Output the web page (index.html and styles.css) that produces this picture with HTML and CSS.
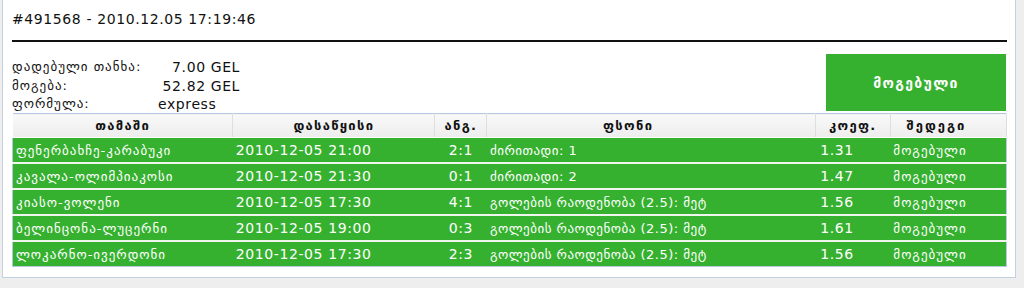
FILE: index.html
```html
<!DOCTYPE html>
<html lang="ka">
<head>
<meta charset="utf-8">
<title>#491568</title>
<link rel="stylesheet" href="styles.css">
</head>
<body>
<div class="panel">
  <div class="title">#491568 - 2010.12.05 17:19:46</div>
  <div class="summary">
    <div class="info">
      <div class="info-row"><span class="label">დადებული თანხა:</span><span class="value num">7.00 GEL</span></div>
      <div class="info-row"><span class="label">მოგება:</span><span class="value num">52.82 GEL</span></div>
      <div class="info-row"><span class="label">ფორმულა:</span><span class="value">express</span></div>
    </div>
    <div class="status">მოგებული</div>
  </div>
  <table class="bets">
    <colgroup>
      <col class="c-game"><col class="c-date"><col class="c-score"><col class="c-bet"><col class="c-coef"><col class="c-res">
    </colgroup>
    <thead>
      <tr><th>თამაში</th><th>დასაწყისი</th><th>ანგ.</th><th class="h-bet">ფსონი</th><th>კოეფ.</th><th class="h-res">შედეგი</th></tr>
    </thead>
    <tbody>
      <tr><td>ფენერბახჩე-კარაბუკი</td><td class="d">2010-12-05 21:00</td><td class="s">2:1</td><td class="b">ძირითადი: 1</td><td class="k">1.31</td><td>მოგებული</td></tr>
      <tr><td>კავალა-ოლიმპიაკოსი</td><td class="d">2010-12-05 21:30</td><td class="s">0:1</td><td class="b">ძირითადი: 2</td><td class="k">1.47</td><td>მოგებული</td></tr>
      <tr><td>კიასო-ვოლენი</td><td class="d">2010-12-05 17:30</td><td class="s">4:1</td><td class="b">გოლების რაოდენობა (2.5): მეტ</td><td class="k">1.56</td><td>მოგებული</td></tr>
      <tr><td>ბელინცონა-ლუცერნი</td><td class="d">2010-12-05 19:00</td><td class="s">0:3</td><td class="b">გოლების რაოდენობა (2.5): მეტ</td><td class="k">1.61</td><td>მოგებული</td></tr>
      <tr><td>ლოკარნო-ივერდონი</td><td class="d">2010-12-05 17:30</td><td class="s">2:3</td><td class="b">გოლების რაოდენობა (2.5): მეტ</td><td class="k">1.56</td><td>მოგებული</td></tr>
    </tbody>
  </table>
</div>
</body>
</html>
```

FILE: styles.css
```css
html, body {
  margin: 0;
  padding: 0;
}
body {
  background: #eeeeee;
  font-family: "DejaVu Sans", Verdana, sans-serif;
  color: #111;
  width: 1024px;
  height: 288px;
  overflow: hidden;
}
.panel {
  margin-left: 2px;
  width: 995px;
  background: #fff;
  border: 1px solid #c3d0e3;
  border-top: none;
  padding: 0 8px 10px 9px;
}
.title {
  height: 40px;
  line-height: 38px;
  font-size: 14px;
  letter-spacing: 0.6px;
  border-bottom: 2px solid #111;
}
.summary {
  display: flex;
  justify-content: space-between;
  align-items: flex-start;
  height: 71px;
}
.info {
  padding-top: 16px;
}
.info-row {
  display: flex;
  height: 18.5px;
  line-height: 18px;
}
.label {
  width: 146px;
  font-size: 13px;
  letter-spacing: 1px;
}
.value {
  width: 82px;
  font-size: 14px;
  letter-spacing: 0.6px;
}
.value.num {
  text-align: right;
}
.status {
  margin-top: 12px;
  width: 180px;
  height: 57px;
  margin-right: 1px;
  background: #36b12f;
  color: #fff;
  font-size: 14px;
  font-weight: bold;
  letter-spacing: 1.3px;
  display: flex;
  align-items: center;
  justify-content: center;
}
.bets {
  width: 995px;
  border-collapse: collapse;
  border: 1px solid #b7c9e1;
  table-layout: fixed;
}
.c-game { width: 220px; }
.c-date { width: 202px; }
.c-score { width: 52px; }
.c-bet { width: 328px; }
.c-coef { width: 75px; }
.c-res { width: 116px; }
.bets th {
  height: 23px;
  padding: 0;
  font-size: 13px;
  font-weight: bold;
  letter-spacing: 1.3px;
  color: #111;
  background: linear-gradient(#f9f9f9, #ededed);
  border-left: 1px solid #fff;
  border-right: 1px solid #dedede;
  border-bottom: 1px solid #fff;
}
.bets th.h-bet {
  padding-right: 46px;
}
.bets th.h-res {
  padding-right: 24px;
  letter-spacing: 2px;
}
.bets td {
  height: 24px;
  padding: 0 0 0 3px;
  background: #36b12f;
  color: #fff;
  font-size: 13px;
  letter-spacing: 1px;
  white-space: nowrap;
  border-bottom: 2px solid #eef6ee;
}
.bets tr:last-child td {
  border-bottom: none;
}
.bets td.d, .bets td.s, .bets td.k {
  font-size: 14px;
  letter-spacing: 0.6px;
}
.bets td.b {
  letter-spacing: 0.5px;
}
.bets td.s {
  text-align: center;
  padding-left: 0;
}
.bets td.k {
  padding-left: 5px;
}
```
